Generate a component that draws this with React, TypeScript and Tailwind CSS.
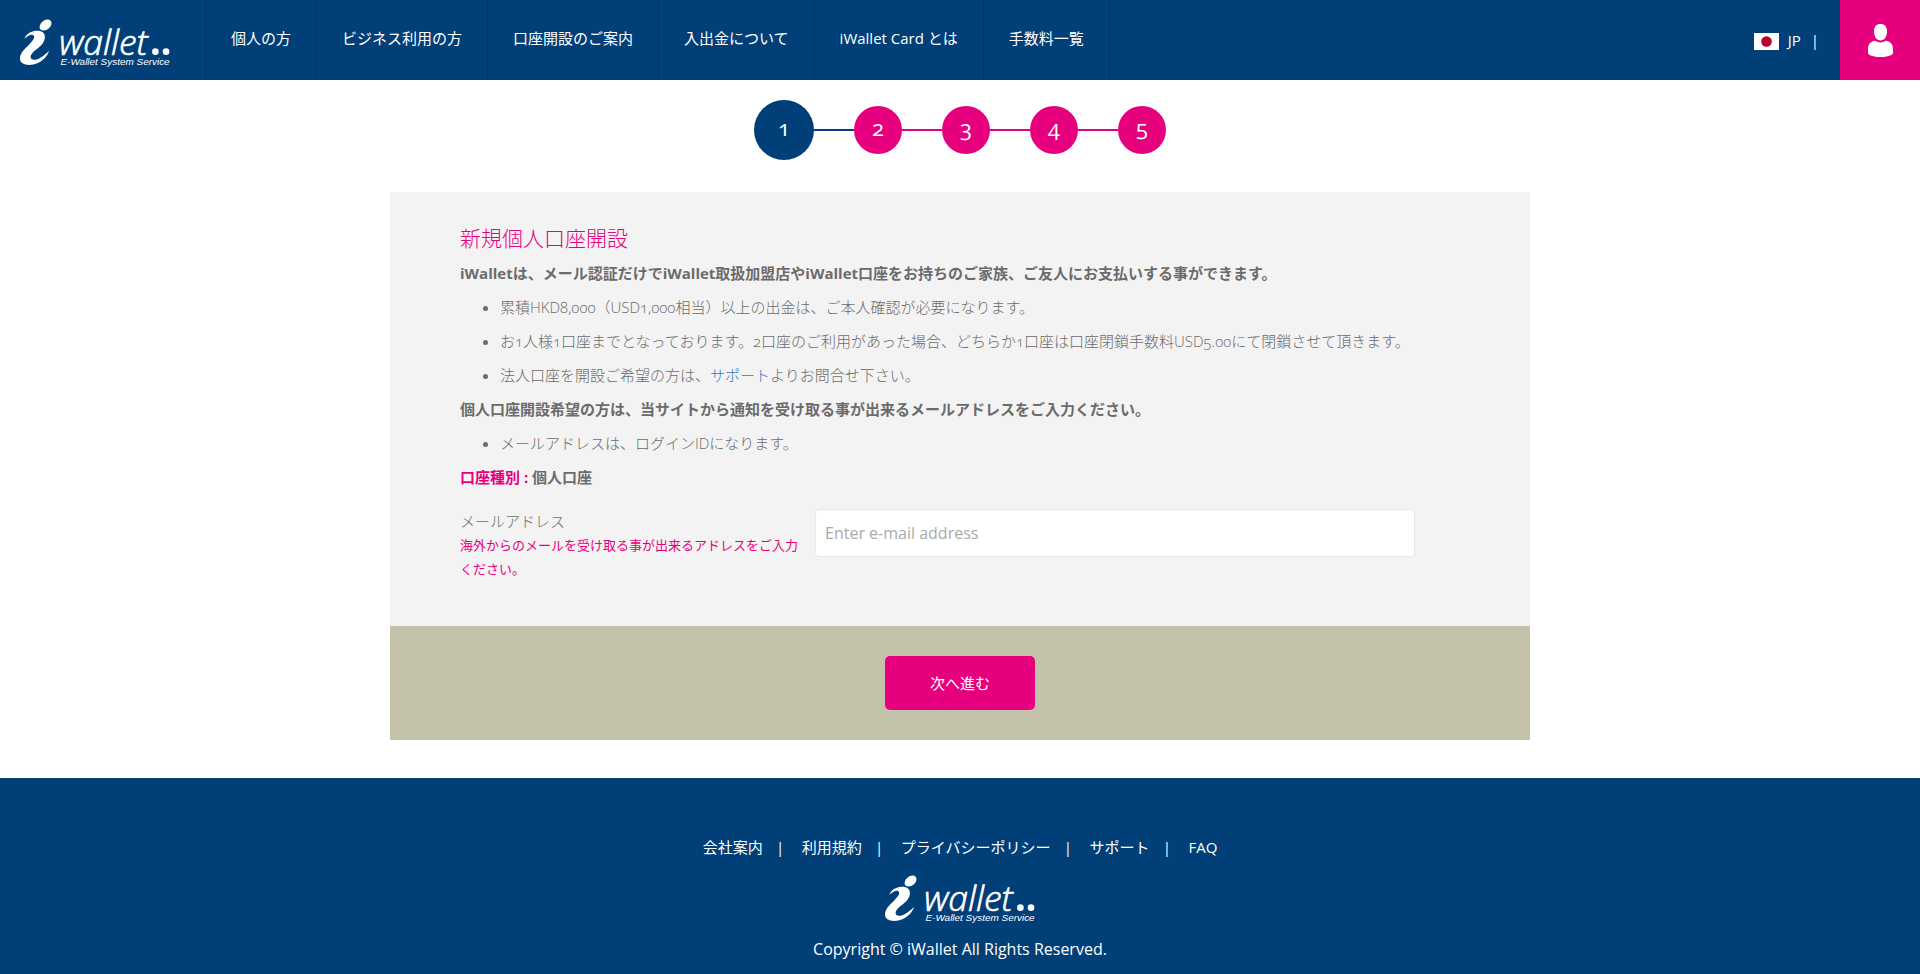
import type { ReactNode } from "react";

const NAV_ITEMS = ["個人の方", "ビジネス利用の方", "口座開設のご案内", "入出金について", "iWallet Card とは", "手数料一覧"];
const FOOTER_LINKS = ["会社案内", "利用規約", "プライバシーポリシー", "サポート", "FAQ"];
const STEPS = [1, 2, 3, 4, 5];

function Logo() {
    return (
        <svg viewBox="60 56 452 147" className="w-[150px] h-[49px] overflow-visible" fill="#fff" role="img" aria-label="iWallet">
            <ellipse cx="137" cy="74" rx="20" ry="14" transform="rotate(-38 137 74)" />
            <path d="M73 115C79 101 92 92 110 91C126 90 135 98 135 109C135 125 124 136 110 147C97 157 91 164 92 172C94 181 107 180 119 174C129 169 138 160 148 152C141 170 122 193 88 194C70 194 60 187 60 175C60 158 73 147 87 133C98 122 105 113 102 107C98 98 84 105 73 115Z" />
            <text x="178" y="163" fontFamily="Open Sans" fontStyle="italic" fontWeight="300" fontSize="107" stroke="#fff" strokeWidth="2">wallet</text>
            <circle cx="468" cy="154" r="10" />
            <circle cx="500" cy="154" r="10" />
            <text x="182" y="193" fontFamily="Liberation Sans" fontStyle="italic" fontSize="30">E-Wallet System Service</text>
        </svg>
    )
}

function Header() {
    return (
        <header className="flex h-20 bg-[#003f78] text-white">
            <a href="#" className="flex w-[205px] shrink-0 items-start pl-5 pt-[19px]">
                <Logo />
            </a>
            <nav className="flex border-r border-[#00366a]">
                {NAV_ITEMS.map((item) => (
                    <a key={item} href="#" className="flex items-center whitespace-nowrap border-l border-[#00366a] px-[25px] pb-1">
                        {item}
                    </a>
                ))}
            </nav>
            <div className="ml-auto flex items-center pr-[21px]">
                <a href="#" className="flex items-center gap-[9px]">
                    <svg viewBox="0 0 25 17" className="mt-[3px] w-[25px] h-[17px]">
                        <rect width="25" height="17" fill="#fff" />
                        <circle cx="12.5" cy="8.5" r="5.3" fill="#bc002d" />
                    </svg>
                    JP
                </a>
                <span className="ml-2.5">|</span>
            </div>
            <button type="button" aria-label="ログイン" className="flex w-20 shrink-0 items-center justify-center bg-[#e6007e]">
                <svg viewBox="0 0 25 33" className="w-[25px] h-[33px]" fill="#fff">
                    <path d="M12.5 0C16.5 0 19 2.6 19 7.2C19 12.5 16.3 16.5 12.5 16.5C8.7 16.5 6 12.5 6 7.2C6 2.6 8.5 0 12.5 0Z" />
                    <path d="M7.5 16.8C10 19 15 19 17.5 16.8C22.5 17.3 25 20.5 25 25V29C25 31 19.5 33 12.5 33C5.5 33 0 31 0 29V25C0 20.5 2.5 17.3 7.5 16.8Z" />
                </svg>
            </button>
        </header>
    )
}

function Steps() {
    return (
        <ol className="flex items-center justify-center pt-5 text-[22px] text-white">
            {STEPS.map((step) => (
                <li key={step} className="flex items-center">
                    {step > 1 && <span className={step === 2 ? "h-0.5 w-10 bg-[#003f78]" : "h-0.5 w-10 bg-[#e6007e]"} />}
                    <span className={step === 1
                        ? "flex size-15 items-center justify-center rounded-full bg-[#003f78] pb-1.5"
                        : "flex size-12 items-center justify-center rounded-full bg-[#e6007e] pb-1.5"}>
                        {step}
                    </span>
                </li>
            ))}
        </ol>
    )
}

function Bullets({ children }: { children: ReactNode }) {
    return <ul className="list-disc pl-10 font-light">{children}</ul>
}

function AccountForm() {
    return (
        <form className="mx-auto mt-8 w-full max-w-[1140px]">
            <div className="bg-[#f3f3f3] px-[70px] pt-7 pb-[45px] leading-[34px]">
                <h1 className="text-[21px] leading-9 font-light text-[#e6007e]">新規個人口座開設</h1>
                <p className="font-bold">iWalletは、メール認証だけでiWallet取扱加盟店やiWallet口座をお持ちのご家族、ご友人にお支払いする事ができます。</p>
                <Bullets>
                    <li>累積HKD8,000（USD1,000相当）以上の出金は、ご本人確認が必要になります。</li>
                    <li>お1人様1口座までとなっております。2口座のご利用があった場合、どちらか1口座は口座閉鎖手数料USD5.00にて閉鎖させて頂きます。</li>
                    <li>法人口座を開設ご希望の方は、<a href="#" className="text-[#337ab7]">サポート</a>よりお問合せ下さい。</li>
                </Bullets>
                <p className="font-bold">個人口座開設希望の方は、当サイトから通知を受け取る事が出来るメールアドレスをご入力ください。</p>
                <Bullets>
                    <li>メールアドレスは、ログインIDになります。</li>
                </Bullets>
                <p className="font-bold"><span className="text-[#e6007e]">口座種別 : </span>個人口座</p>
                <div className="mt-[15px] grid grid-cols-[340px_minmax(0,600px)] gap-[15px]">
                    <label htmlFor="email" className="leading-6 font-light">
                        メールアドレス
                        <span className="block text-[13px] font-normal text-[#e6007e]">海外からのメールを受け取る事が出来るアドレスをご入力ください。</span>
                    </label>
                    <input
                        id="email"
                        type="email"
                        placeholder="Enter e-mail address"
                        className="h-12 w-full rounded border border-[#e8e8e8] bg-white px-[9px] text-base placeholder:text-[#aaa]"
                    />
                </div>
            </div>
            <div className="flex justify-center bg-[#c5c2ab] py-[30px]">
                <button type="submit" className="h-[54px] w-[150px] rounded-[5px] bg-[#e6007e] text-white">次へ進む</button>
            </div>
        </form>
    )
}

function Footer() {
    return (
        <footer className="mt-[38px] flex grow flex-col items-center bg-[#003f78] pt-[57px] text-white">
            <ul className="flex leading-6">
                {FOOTER_LINKS.map((link, i) => (
                    <li key={link}>
                        {i > 0 && <span className="inline-block w-[39px] pr-1 text-center">|</span>}
                        <a href="#">{link}</a>
                    </li>
                ))}
            </ul>
            <a href="#" className="mt-4">
                <Logo />
            </a>
            <p className="mt-[13px] text-base">Copyright © iWallet All Rights Reserved.</p>
        </footer>
    )
}

export default function App() {
    return (
        <div className="flex min-h-screen flex-col bg-white font-['Open_Sans','Noto_Sans_CJK_JP',sans-serif] text-[15px] text-[#6b6b6b] oldstyle-nums">
            <Header />
            <main>
                <Steps />
                <AccountForm />
            </main>
            <Footer />
        </div>
    )
}
